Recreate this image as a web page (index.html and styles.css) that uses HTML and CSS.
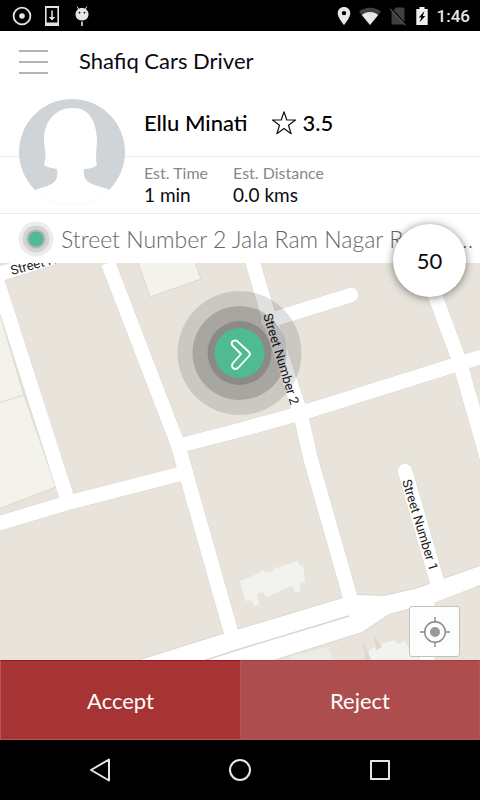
FILE: index.html
```html
<!DOCTYPE html>

<html lang="en">

	<head>
		<meta charset="utf-8">
		<meta name="viewport" content="width=device-width, initial-scale=1">
		<title>Shafiq Cars Driver</title>
		<link rel="stylesheet" href="styles.css">
	</head>

	<body>

		<div class="status-bar">
			<svg width="20" height="20" viewBox="0 0 20 20">
				<circle cx="10" cy="10" r="8.4" fill="none" stroke="#e4e4e4" stroke-width="1.8"/>
				<circle cx="10" cy="10" r="2.8" fill="#e4e4e4"/>
			</svg>
			<svg width="20" height="20" viewBox="0 0 20 20">
				<path d="M3 0h14v20H3zM4.600 2v14.500h10.800V2z" fill="#e4e4e4" fill-rule="evenodd"/>
				<path d="M9.300 4.500h1.500v6.500h2.400L10 14.500 6.800 11h2.500z" fill="#e4e4e4"/>
			</svg>
			<svg width="20" height="20" viewBox="0 0 20 20">
				<path d="M5 .5l2 3M15 .5l-2 3" stroke="#e4e4e4"/>
				<path d="M3.500 8.500C3.500 4.500 6.500 2 10 2s6.500 2.500 6.500 6.500c0 3-2.500 6-6.500 6s-6.500-3-6.500-6z" fill="#e4e4e4"/>
				<path d="M9.200 15.500h1.600v4.500H9.200z" fill="#e4e4e4"/>
				<circle cx="7.500" cy="6.600" r=".9"/>
				<circle cx="12.500" cy="6.600" r=".9"/>
			</svg>
			<span class="status-right">
				<svg width="14" height="20" viewBox="0 0 14 20">
					<path d="M7 1C3.500 1 .7 3.700.7 7.200.7 11.800 7 19 7 19s6.300-7.200 6.300-11.800C13.300 3.700 10.500 1 7 1zm0 8.300a2.200 2.200 0 1 1 0-4.400 2.200 2.200 0 0 1 0 4.400z" fill="#e8e8e8"/>
				</svg>
				<svg width="22" height="20" viewBox="0 0 22 20">
					<path d="M11 19L0 5.500C6 .5 16 .5 22 5.500z" fill="#404040"/>
					<path d="M11 19L2.800 9c4.500-4 11.900-4 16.400 0z" fill="#e8e8e8"/>
				</svg>
				<svg width="18" height="20" viewBox="0 0 18 20">
					<path d="M7 1.500h7q1.500 0 1.500 1.500v14q0 1.500-1.500 1.500H4q-1.500 0-1.500-1.500V6z" fill="#404040"/>
					<path d="M2 2.300l15 16.500" stroke="#000" stroke-width="1.400"/>
					<path d="M1 2.800l15.500 16.500" stroke="#555" stroke-width="1.200"/>
				</svg>
				<svg width="14" height="20" viewBox="0 0 14 20">
					<path d="M4.500 1h5v2h3.200v16H1.300V3h3.200z" fill="#f0f0f0"/>
					<path d="M9.500 5L3.800 11.500h2.500L4.500 16.500 10.300 10H7.800z"/>
				</svg>
				<span class="clock">1:46</span>
			</span>
		</div>

		<header class="app-bar">
			<button type="button" class="menu-button" aria-label="Menu">
				<span></span>
				<span></span>
				<span></span>
			</button>
			<h1>Shafiq Cars Driver</h1>
		</header>

		<section class="rider">
			<svg class="avatar" width="106" height="106" viewBox="0 0 106 106">
				<defs>
					<clipPath id="avatar-clip"><circle cx="53" cy="53" r="53"/></clipPath>
				</defs>
				<g clip-path="url(#avatar-clip)">
					<path d="M0 0h106v106H0z" fill="#cfd4d8"/>
					<path d="M54 9C36 9 26 22 25 39c-.5 10 3 14 1 22l-1 5c4 3 9 3 13 4 1 6 0 11-4 14-6 4-10 4-18 7L0 106h106l-15-15c-8-3-14-4-20-7-5-3-7-8-6-14 5 0 9-1 13-4-2-8 0-17 0-26C77 22 70 9 54 9z" fill="#fff"/>
				</g>
			</svg>
			<div class="rider-name">
				<strong>Ellu Minati</strong>
				<svg width="26" height="26" viewBox="0 0 26 26">
					<path d="M13 1.800l2.800 8.200h8.700l-7 5.200 2.600 8.500-7.100-5.200-7.100 5.200 2.600-8.500-7-5.200h8.700z" fill="none" stroke="#111" stroke-width="1.200" stroke-linejoin="round"/>
				</svg>
				<strong>3.5</strong>
			</div>
			<dl class="rider-trip">
				<div>
					<dt>Est. Time</dt>
					<dd>1 min</dd>
				</div>
				<div>
					<dt>Est. Distance</dt>
					<dd>0.0 kms</dd>
				</div>
			</dl>
		</section>

		<div class="pickup">
			<svg width="36" height="36" viewBox="0 0 36 36">
				<circle cx="18" cy="18" r="17.500" fill="#ececec"/>
				<circle cx="18" cy="18" r="13.500" fill="#d3d3d3"/>
				<circle cx="18" cy="18" r="9.500" fill="#b5b5b5"/>
				<circle cx="18" cy="18" r="7.500" fill="#50bb93"/>
			</svg>
			<p>Street Number 2 Jala Ram Nagar Ramapuram Colony</p>
		</div>

		<main class="map">

			<svg class="map-tiles" viewBox="0 263 480 397" preserveAspectRatio="xMidYMid slice">

				<!-- parcels -->
				<g fill="#f3f3ec" stroke="#d9d8d1">
					<path d="M-2 308L24 395 56 487-2 509z"/>
					<path d="M-2 403l26-8" fill="none"/>
					<path d="M137 260l13 37 51-18-7-19z"/>
				</g>

				<!-- buildings -->
				<g fill="#f2f2ee">
					<path d="M240 581l20-8 2-3 4 3 8-2v-5l4 3 4-3 16-5 2 5 3-1 2 16-5 2v8l-5 2-3-7-7 3-19 8-3-5-6 2 2 10-5 2-3-6-6 1z"/>
					<path d="M369 650l12-6 14-4 3 4 7-3 6 10 9 9h-52z"/>
					<path d="M363 640l8 20h-6zM374 635l8 12-6 3z" fill="#dcd8d0"/>
					<path d="M290 656l38-9 6 13h-44z" fill="#edebe5"/>
				</g>

				<!-- road edges, then the roads over them -->
				<g fill="none" stroke="#dcd8cf" stroke-width="15.500">
					<path d="M-10 277L70 252M-6 271L67 498M108 263L178 445 231 632"/>
					<path d="M-10 526L0 523 67 503 180 474M178 446L240 430 305 412 458 364 490 354"/>
					<path d="M252 260L267 311 300 412 311 460 351 600M423 263L459 360 489 465"/>
					<path d="M268 321L351 295M405 471L438 585" stroke-linecap="round"/>
					<path d="M140 660L223 634 343 598 358 595 384 596 415 589 480 566V585L408 609 389 614 362 632 273 660z" stroke-width="2"/>
				</g>
				<g fill="none" stroke="#fff" stroke-width="14.500">
					<path d="M-10 277L70 252M-6 271L67 498M108 263L178 445 231 632"/>
					<path d="M-10 526L0 523 67 503 180 474M178 446L240 430 305 412 458 364 490 354"/>
					<path d="M252 260L267 311 300 412 311 460 351 600M423 263L459 360 489 465M427 600V665"/>
					<path d="M268 321L351 295M405 471L438 585" stroke-linecap="round"/>
					<path d="M140 660L223 634 343 598 358 595 384 596 415 589 480 566V585L425 606 408 609 389 614 362 632 273 660z" fill="#fff" stroke="none"/>
				</g>
				<path d="M203 661L240 649 349 616" fill="none" stroke="#dad6cc" stroke-width="1.500"/>

				<g class="street-names">
					<text transform="translate(12 275) rotate(-15)">Street Number 3</text>
					<text transform="translate(263 315) rotate(73)">Street Number 2</text>
					<text transform="translate(402 481) rotate(73)">Street Number 1</text>
				</g>

				<!-- car position -->
				<circle cx="239.500" cy="353" r="62" fill-opacity=".12"/>
				<circle cx="239.500" cy="353" r="47" fill-opacity=".17"/>
				<circle cx="239.500" cy="353" r="32" fill-opacity=".17"/>
				<circle cx="239.500" cy="353" r="25" fill="#50bb93"/>
				<path d="M232 345q-1-3 1-4t4 0l12 11q2 2 0 4l-11 12q-3 2-5 0t0-5l8-9z" fill="none" stroke="#fff" stroke-width="1.800" stroke-linejoin="round"/>

			</svg>

			<div class="countdown">50</div>

			<button type="button" class="locate-button" aria-label="My location">
				<svg width="32" height="32" viewBox="0 0 32 32">
					<circle cx="16" cy="16" r="10.300" fill="none" stroke="#888" stroke-width="1.400"/>
					<circle cx="16" cy="16" r="5" fill="#999"/>
					<path d="M16 1v5M16 26v5M1 16h5M26 16h5" stroke="#888" stroke-width="1.400"/>
				</svg>
			</button>

		</main>

		<div class="actions">
			<button type="button" class="accept">Accept</button>
			<button type="button" class="reject">Reject</button>
		</div>

		<nav class="nav-bar">
			<button type="button" aria-label="Back">
				<svg width="24" height="24" viewBox="0 0 24 24"><path d="M21 1.500v21L3 12z"/></svg>
			</button>
			<button type="button" aria-label="Home">
				<svg width="24" height="24" viewBox="0 0 24 24"><circle cx="12" cy="12" r="10"/></svg>
			</button>
			<button type="button" aria-label="Recent apps">
				<svg width="24" height="24" viewBox="0 0 24 24"><path d="M3 3h18v18H3z"/></svg>
			</button>
		</nav>

	</body>

</html>
```

FILE: styles.css
```css
* { box-sizing:border-box; }
body {
	display:flex;
	flex-direction:column;
	min-height:100vh;
	margin:0;
	background-color:#fff;
	color:#0a0a14;
	font-family: Lato, "Liberation Sans", sans-serif;
	font-size:20px;
}
button {
	padding:0;
	border:0;
	background:none;
	font:inherit;
}
svg { display:block; flex:none; }

.status-bar {
	display:flex;
	align-items:center;
	gap:10px;
	height:31px;
	padding:0 10px 0 12px;
	background-color:#000;
}
.status-right {
	display:flex;
	align-items:center;
	gap:8px;
	margin-left:auto;
}
.clock {
	color:#e8e8e8;
	font-family: Roboto, sans-serif;
	font-size:17px;
	font-weight:500;
}

.app-bar {
	display:flex;
	align-items:center;
	gap:31px;
	height:62px;
	padding:0 19px;
}
.app-bar h1 {
	margin:0;
	font-size:22px;
	font-weight:400;
	line-height:30px;
	padding-bottom:2px;
}
.menu-button {
	display:grid;
	gap:9px;
	width:29px;
}
.menu-button span {
	height:2px;
	background-color:#b4b4b4;
}

.rider {
	display:grid;
	grid-template-rows:64px 57px;
}
.avatar {
	grid-area:1 / 1 / 3 / 2;
	z-index:1;
	margin:6px 0 0 19px;
}
.rider-name, .rider-trip {
	display:flex;
	align-items:center;
	grid-column:1;
	margin:0;
	padding-left:144px;
	border-bottom:1px solid #ececec;
}
.rider-name {
	grid-row:1;
	padding-bottom:4px;
	color:#000;
	font-size:22px;
}
.rider-name strong { font-weight:500; }
.rider-name svg { margin:0 6px 0 23px; }
.rider-trip { grid-row:2; gap:25px; }
.rider-trip dt {
	color:#888;
	font-size:16px;
	line-height:20px;
}
.rider-trip dd {
	margin:0;
	font-size:19px;
	line-height:24px;
}

.pickup {
	display:flex;
	align-items:center;
	gap:7px;
	height:49px;
	padding:0 6px 0 18px;
}
.pickup p {
	margin:0;
	overflow:hidden;
	color:#666;
	font-size:23px;
	font-weight:300;
	text-overflow:ellipsis;
	white-space:nowrap;
}

.map {
	position:relative;
	flex:1;
	min-height:240px;
	background-color:#e8e4dc;
}
.map-tiles {
	position:absolute;
	width:100%;
	height:100%;
}
.street-names {
	fill:#222;
	font-family: Roboto, sans-serif;
	font-size:13px;
}
.countdown {
	position:absolute;
	top:-39px;
	right:14px;
	width:73px;
	height:73px;
	border-radius:50%;
	background-color:#fff;
	box-shadow:0 1px 8px rgba(0, 0, 0, .5);
	font-size:22px;
	line-height:74px;
	text-align:center;
}
.locate-button {
	display:flex;
	align-items:center;
	justify-content:center;
	position:absolute;
	right:20px;
	bottom:3px;
	width:51px;
	height:51px;
	border:1px solid #c4c2be;
	border-radius:3px;
	background-color:#fdfdfd;
}

.actions {
	display:grid;
	grid-template-columns:1fr 1fr;
	height:80px;
}
.actions button {
	border:1px solid #b55;
	color:#fff;
	font-size:22px;
}
.actions .accept {
	border-top-color:#9c1414;
	border-right:0;
	background-color:#a63434;
}
.actions .reject {
	border-top-color:#a63a3a;
	background-color:#ad4d4d;
}

.nav-bar {
	display:flex;
	justify-content:center;
	gap:116px;
	height:60px;
	background-color:#000;
}
.nav-bar svg {
	fill:none;
	stroke:#e6e6e6;
	stroke-width:2;
	stroke-linejoin:round;
}
```
